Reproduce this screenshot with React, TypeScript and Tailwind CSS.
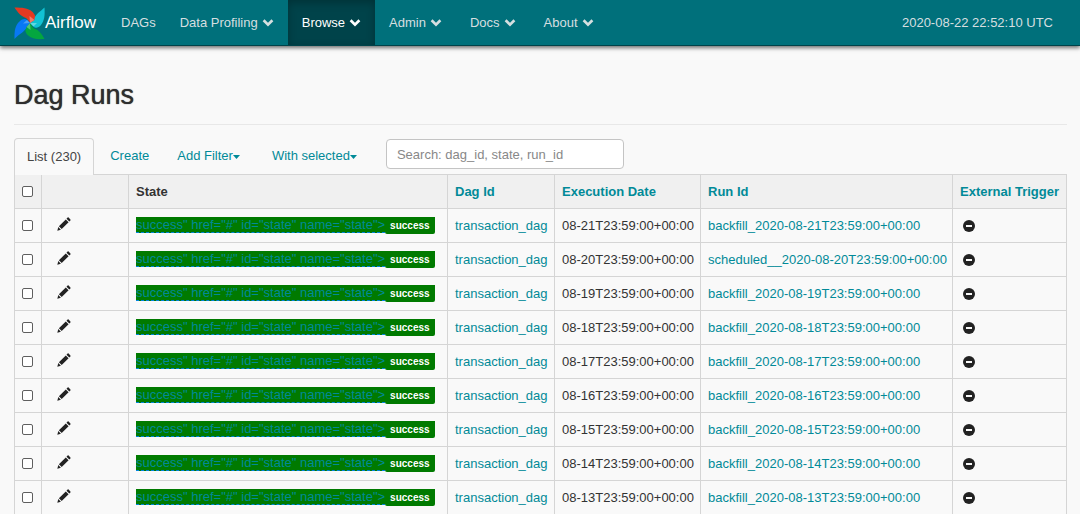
import React from "react";

const LINK = "text-[#018a98] hover:underline";

function Chevron() {
  return (
    <svg viewBox="0 0 12 12" className="size-3" aria-hidden="true">
      <path d="M1.600 3.300 6 7.600 10.400 3.300" fill="none" stroke="currentColor" strokeWidth="2.7" />
    </svg>
  );
}

function Caret() {
  return (
    <svg viewBox="0 0 7 4" className="mt-0.5 h-1 w-[7px]" aria-hidden="true">
      <path d="M0 0h7L3.500 4z" fill="currentColor" />
    </svg>
  );
}

function Pencil() {
  return (
    <svg viewBox="0 0 14 14" className="size-3.5" fill="currentColor" aria-hidden="true">
      <path d="M0.300 13.700 1.300 10.100 3.900 12.700zM1.900 9.300 8.800 2.400 11.600 5.200 4.700 12.100zM9.500 1.700 10.600 0.600Q11.100 0.100 11.600 0.600L13.400 2.400Q13.900 2.900 13.400 3.400L12.300 4.500z" />
    </svg>
  );
}

function MinusSign() {
  return (
    <svg viewBox="0 0 12 12" className="size-3" role="img" aria-label="False">
      <circle cx="6" cy="6" r="6" fill="#222" />
      <rect x="3" y="5" width="6" height="2" fill="#f9f9f9" />
    </svg>
  );
}

function Pinwheel() {
  return (
    <svg viewBox="0 0 31 33" className="mt-px h-[33px] w-[31px] shrink-0" aria-hidden="true">
      <path d="M0.500 0.500C8 0.500 14 1 18 4.500C21 7.500 22.500 10.500 20.500 13L16 16C15 14.500 14 12.500 12 11C7 9.500 3.500 5 0.500 0.500z" fill="#e43921" />
      <path d="M20.500 13C20 8 26 5 30.500 0.500C31 8 30.500 13.500 27 18C24.500 21 21 21.500 19.500 19.500L16 16z" fill="#11c2d4" />
      <path d="M30.500 32C23 32.500 18 32 13.500 28C11.500 25.500 10.500 22.500 12.500 20L16 16C17.500 17.500 18 20 20 21.500C25 23 28 27 30.500 32z" fill="#04a63f" />
      <path d="M0.500 32C0.300 24 1 18.500 5.500 14.500C8.500 11.500 11.500 11.500 13 13L16 16L12.500 20C12 24 5 27 0.500 32z" fill="#0878f4" />
      <path d="M20.500 13 16 16 15.500 9z" fill="#f37a68" />
      <path d="M19.500 19.500 16 16 23 16z" fill="#5fd8e2" />
      <path d="M12.500 20 16 16 16.500 23z" fill="#4fc37a" />
      <path d="M13 13 16 16 9 16.500z" fill="#4aa0f6" />
    </svg>
  );
}

const menus = ["Data Profiling", "Browse", "Admin", "Docs", "About"];

function NavBar() {
  return (
    <nav className="flex h-[46px] items-stretch border-b border-[#00434a] bg-[#00707b] text-[#d6dfe0] shadow-[0_2px_4px_rgba(0,0,0,0.55)]">
      <a href="#" className="flex w-[107px] items-center pl-3.5 text-[17px] text-white">
        <Pinwheel />
        Airflow
      </a>
      <a href="#" className="flex items-center pr-2.5 pl-3.5 hover:text-white">DAGs</a>
      {menus.map((label) => (
        <button
          key={label}
          type="button"
          className={
            label === "Browse"
              ? "flex items-center gap-1 bg-[#00434a] px-3.5 text-white shadow-[inset_0_3px_9px_rgba(0,0,0,0.25)]"
              : "flex items-center gap-1 px-3.5 hover:text-white"
          }
        >
          {label}
          <Chevron />
        </button>
      ))}
      <span className="ml-auto flex items-center pr-[27px]">2020-08-22 22:52:10 UTC</span>
    </nav>
  );
}

function Toolbar() {
  return (
    <div className="flex items-end">
      <a
        href="#"
        className="relative -mb-px flex h-[37px] items-center rounded-t border border-b-0 border-[#d5d5d5] bg-[#f9f9f9] px-3 text-[#444]"
      >
        List (230)
      </a>
      <a href="#" className="flex h-9 items-center pr-3.5 pl-4 text-[#018a98]">Create</a>
      <button type="button" className="flex h-9 items-center px-3.5 text-[#018a98]">
        Add Filter
        <Caret />
      </button>
      <button type="button" className="ml-1 flex h-9 items-center px-3.5 text-[#018a98]">
        With selected
        <Caret />
      </button>
      <input
        type="text"
        aria-label="Search"
        placeholder="Search: dag_id, state, run_id"
        className="mb-[5px] ml-[15px] h-[30px] w-[238px] rounded border border-[#c4c4c4] bg-white px-2.5 text-[#444] placeholder:text-[#888]"
      />
    </div>
  );
}

function Check({ label }: { label: string }) {
  return (
    <input
      type="checkbox"
      aria-label={label}
      className="block size-[11px] appearance-none rounded-[2px] border border-[#5f5f5f] bg-white checked:bg-[#0878f4]"
    />
  );
}

const runs = [
  { day: "08-21", prefix: "backfill_" },
  { day: "08-20", prefix: "scheduled__" },
  { day: "08-19", prefix: "backfill_" },
  { day: "08-18", prefix: "backfill_" },
  { day: "08-17", prefix: "backfill_" },
  { day: "08-16", prefix: "backfill_" },
  { day: "08-15", prefix: "backfill_" },
  { day: "08-14", prefix: "backfill_" },
  { day: "08-13", prefix: "backfill_" },
];

const CELL = "border border-[#d5d5d5] px-[7px]";

function RunsTable() {
  return (
    <table className="w-full table-fixed border-collapse whitespace-nowrap text-left">
      <colgroup>
        <col className="w-[27px]" />
        <col className="w-[87px]" />
        <col className="w-[319px]" />
        <col className="w-[107px]" />
        <col className="w-[146px]" />
        <col />
        <col className="w-[114px]" />
      </colgroup>
      <thead>
        <tr className="h-[34px] bg-[#f0f0f0]">
          <th className={CELL}><Check label="Select all" /></th>
          <th className={CELL} />
          <th className={CELL}>State</th>
          <th className={CELL}><a href="#" className={LINK}>Dag Id</a></th>
          <th className={CELL}><a href="#" className={LINK}>Execution Date</a></th>
          <th className={CELL}><a href="#" className={LINK}>Run Id</a></th>
          <th className={CELL}><a href="#" className={LINK}>External Trigger</a></th>
        </tr>
      </thead>
      <tbody>
        {runs.map(({ day, prefix }) => (
          <tr key={day} className="h-[34px]">
            <td className={CELL}><Check label={`Select ${day}`} /></td>
            <td className={CELL}>
              <button type="button" aria-label="Edit" className="ml-2 block pb-1 text-[#222]">
                <Pencil />
              </button>
            </td>
            <td className={CELL}>
              <div className="flex items-start">
                <a href="#" className="h-4 border-b border-dashed border-[#0084dc] bg-[#007a00] leading-4 text-[#018a98]">
                  {'success" href="#" id="state" name="state">'}
                </a>
                <span className="h-[17px] rounded-b-[2px] bg-[#007a00] px-[5px] text-[10px] leading-[18px] font-bold text-white">
                  success
                </span>
              </div>
            </td>
            <td className={CELL}><a href="#" className={LINK}>transaction_dag</a></td>
            <td className={CELL}>{day}T23:59:00+00:00</td>
            <td className={CELL}>
              <a href="#" className={LINK}>{prefix}2020-{day}T23:59:00+00:00</a>
            </td>
            <td className="border border-[#d5d5d5] px-2.5"><MinusSign /></td>
          </tr>
        ))}
      </tbody>
    </table>
  );
}

export default function App() {
  return (
    <div className="h-screen overflow-hidden bg-[#f9f9f9] font-['Liberation_Sans',Arial,sans-serif] text-[13px] leading-[18px] text-[#333]">
      <NavBar />
      <main className="pt-8 pr-[13px] pl-3.5">
        <h1 className="mb-5 border-b border-[#e8e8e8] pb-3 text-[27px] leading-[34px] text-[#2e2e2e] [text-shadow:0_0_1px_currentColor]">
          Dag Runs
        </h1>
        <div className="-mt-[7px]">
          <Toolbar />
          <RunsTable />
        </div>
      </main>
    </div>
  );
}
